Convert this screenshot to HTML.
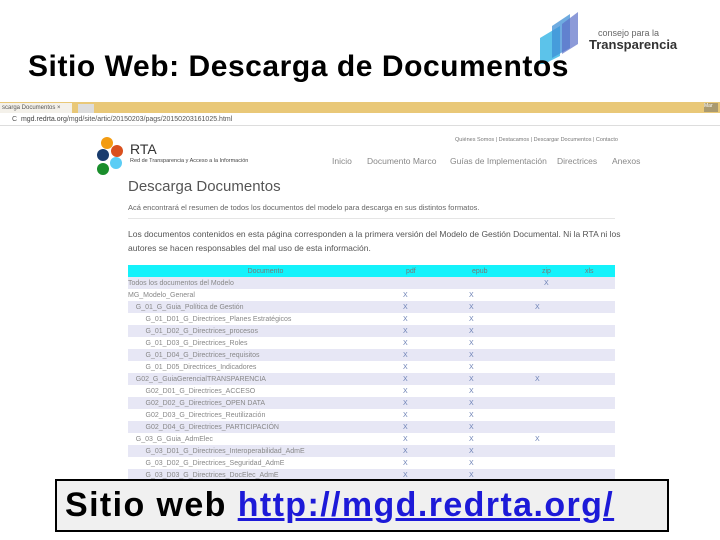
<!DOCTYPE html>
<html><head><meta charset="utf-8"><style>
*{margin:0;padding:0;box-sizing:border-box}
body{width:720px;height:540px;background:#fff;position:relative;overflow:hidden;font-family:"Liberation Sans",sans-serif}
.title{position:absolute;left:28px;top:50px;font-size:30px;font-weight:bold;color:#000;white-space:nowrap;letter-spacing:0.55px}
.tabs{position:absolute;left:0;top:102px;width:720px;height:11px;background:#e9c878}
.tab{position:absolute;left:0;top:1px;width:72px;height:10px;background:#f4f1ea;font-size:6px;color:#555;padding-left:2px;line-height:10px}
.addr{position:absolute;left:0;top:113px;width:720px;height:13px;background:#fff;border-bottom:1px solid #ddd;font-size:7px;color:#555;line-height:13px;padding-left:12px}
.addr span{color:#444}
.page{position:absolute;left:0;top:126px;width:720px;height:354px;background:#fff}
.c{position:absolute;border-radius:50%;width:12px;height:12px}
.rta{position:absolute;left:130px;top:141px;font-size:14px;color:#333}
.rtasub{position:absolute;left:130px;top:158px;font-size:5.5px;color:#444}
.toplinks{position:absolute;left:455px;top:137px;font-size:5.5px;color:#777}
.nav{position:absolute;top:156px;font-size:8.5px;color:#888}
h2{position:absolute;left:128px;top:178px;font-size:15px;font-weight:normal;color:#555}
.p1{position:absolute;left:128px;top:203px;font-size:7.5px;color:#666}
.hr{position:absolute;left:128px;top:218px;width:487px;height:1px;background:#e5e5e5}
.p2{position:absolute;left:128px;top:227px;font-size:8.5px;color:#555;line-height:14px;width:500px}
table{position:absolute;left:128px;top:265px;width:487px;border-collapse:collapse;font-size:7px;color:#888}
td{height:12px;padding:0;white-space:nowrap}
tr.h td{background:#14f2fb;color:#777;height:12px}
tr:nth-child(even) td{background:#e7e7f5}
td.x{color:#6a7fb4;padding-left:0}
.box{position:absolute;left:55px;top:479px;width:614px;height:53px;background:#f0f0f0;border:2px solid #000;font-size:34px;font-weight:bold;line-height:49px;padding-left:8px;color:#000;white-space:nowrap;letter-spacing:1.4px}
.box a{color:#1d1ad8;text-decoration:underline}
</style></head><body>
<svg style="position:absolute;left:538px;top:8px" width="50" height="56" viewBox="0 0 50 56">
<polygon points="2,30 22,18 22,48 2,58" fill="#3fb9e6" opacity="0.85"/>
<polygon points="14,18 32,6 32,40 14,50" fill="#3f8fd6" opacity="0.75"/>
<polygon points="24,16 40,4 40,36 24,46" fill="#5b6fc8" opacity="0.7"/>
</svg>
<div style="position:absolute;left:598px;top:28px;font-size:9px;color:#666">consejo para la</div>
<div style="position:absolute;left:589px;top:37px;font-size:13px;font-weight:bold;color:#333">Transparencia</div>
<div class="title">Sitio Web: Descarga de Documentos</div>
<div class="tabs"><div class="tab">scarga Documentos × </div><div style="position:absolute;left:78px;top:2px;width:16px;height:9px;background:#ddd"></div><div style="position:absolute;right:2px;top:1px;width:14px;height:9px;background:#aa9a70;font-size:5px;color:#fff">Mar</div></div>
<div class="addr">C &nbsp;<span>mgd.redrta.org</span>/mgd/site/artic/20150203/pags/20150203161025.html</div>
<div class="page">
<div class="c" style="left:101px;top:11px;background:#f39c12"></div>
<div class="c" style="left:111px;top:19px;background:#d9501e"></div>
<div class="c" style="left:97px;top:23px;background:#183b6d"></div>
<div class="c" style="left:110px;top:31px;background:#5bcdf5"></div>
<div class="c" style="left:97px;top:37px;background:#1a8e2c"></div>
</div>
<div class="rta">RTA</div>
<div class="rtasub">Red de Transparencia y Acceso a la Información</div>
<div class="toplinks">Quiénes Somos | Destacamos | Descargar Documentos | Contacto</div>
<div class="nav" style="left:332px">Inicio</div>
<div class="nav" style="left:367px">Documento Marco</div>
<div class="nav" style="left:450px">Guías de Implementación</div>
<div class="nav" style="left:557px">Directrices</div>
<div class="nav" style="left:612px">Anexos</div>
<h2>Descarga Documentos</h2>
<div class="p1">Acá encontrará el resumen de todos los documentos del modelo para descarga en sus distintos formatos.</div>
<div class="hr"></div>
<div class="p2">Los documentos contenidos en esta página corresponden a la primera versión del Modelo de Gestión Documental. Ni la RTA ni los autores se hacen responsables del mal uso de esta información.</div>
<table>
<colgroup><col style="width:275px"><col style="width:66px"><col style="width:66px"><col style="width:50px"><col></colgroup>
<tr class="h"><td style="text-align:center">Documento</td><td style="padding-left:3px">pdf</td><td style="padding-left:3px">epub</td><td style="padding-left:7px">zip</td><td>xls</td></tr>
<tr><td>Todos los documentos del Modelo</td><td></td><td></td><td class="x" style="padding-left:9px">X</td><td></td></tr>
<tr><td>MG_Modelo_General</td><td class="x">X</td><td class="x">X</td><td></td><td></td></tr>
<tr><td>&nbsp;&nbsp;&nbsp;&nbsp;G_01_G_Guia_Política de Gestión</td><td class="x">X</td><td class="x">X</td><td class="x">X</td><td></td></tr>
<tr><td>&nbsp;&nbsp;&nbsp;&nbsp;&nbsp;&nbsp;&nbsp;&nbsp;&nbsp;G_01_D01_G_Directrices_Planes Estratégicos</td><td class="x">X</td><td class="x">X</td><td></td><td></td></tr>
<tr><td>&nbsp;&nbsp;&nbsp;&nbsp;&nbsp;&nbsp;&nbsp;&nbsp;&nbsp;G_01_D02_G_Directrices_procesos</td><td class="x">X</td><td class="x">X</td><td></td><td></td></tr>
<tr><td>&nbsp;&nbsp;&nbsp;&nbsp;&nbsp;&nbsp;&nbsp;&nbsp;&nbsp;G_01_D03_G_Directrices_Roles</td><td class="x">X</td><td class="x">X</td><td></td><td></td></tr>
<tr><td>&nbsp;&nbsp;&nbsp;&nbsp;&nbsp;&nbsp;&nbsp;&nbsp;&nbsp;G_01_D04_G_Directrices_requisitos</td><td class="x">X</td><td class="x">X</td><td></td><td></td></tr>
<tr><td>&nbsp;&nbsp;&nbsp;&nbsp;&nbsp;&nbsp;&nbsp;&nbsp;&nbsp;G_01_D05_Directrices_Indicadores</td><td class="x">X</td><td class="x">X</td><td></td><td></td></tr>
<tr><td>&nbsp;&nbsp;&nbsp;&nbsp;G02_G_GuiaGerencialTRANSPARENCIA</td><td class="x">X</td><td class="x">X</td><td class="x">X</td><td></td></tr>
<tr><td>&nbsp;&nbsp;&nbsp;&nbsp;&nbsp;&nbsp;&nbsp;&nbsp;&nbsp;G02_D01_G_Directrices_ACCESO</td><td class="x">X</td><td class="x">X</td><td></td><td></td></tr>
<tr><td>&nbsp;&nbsp;&nbsp;&nbsp;&nbsp;&nbsp;&nbsp;&nbsp;&nbsp;G02_D02_G_Directrices_OPEN DATA</td><td class="x">X</td><td class="x">X</td><td></td><td></td></tr>
<tr><td>&nbsp;&nbsp;&nbsp;&nbsp;&nbsp;&nbsp;&nbsp;&nbsp;&nbsp;G02_D03_G_Directrices_Reutilización</td><td class="x">X</td><td class="x">X</td><td></td><td></td></tr>
<tr><td>&nbsp;&nbsp;&nbsp;&nbsp;&nbsp;&nbsp;&nbsp;&nbsp;&nbsp;G02_D04_G_Directrices_PARTICIPACIÓN</td><td class="x">X</td><td class="x">X</td><td></td><td></td></tr>
<tr><td>&nbsp;&nbsp;&nbsp;&nbsp;G_03_G_Guia_AdmElec</td><td class="x">X</td><td class="x">X</td><td class="x">X</td><td></td></tr>
<tr><td>&nbsp;&nbsp;&nbsp;&nbsp;&nbsp;&nbsp;&nbsp;&nbsp;&nbsp;G_03_D01_G_Directrices_Interoperabilidad_AdmE</td><td class="x">X</td><td class="x">X</td><td></td><td></td></tr>
<tr><td>&nbsp;&nbsp;&nbsp;&nbsp;&nbsp;&nbsp;&nbsp;&nbsp;&nbsp;G_03_D02_G_Directrices_Seguridad_AdmE</td><td class="x">X</td><td class="x">X</td><td></td><td></td></tr>
<tr><td>&nbsp;&nbsp;&nbsp;&nbsp;&nbsp;&nbsp;&nbsp;&nbsp;&nbsp;G_03_D03_G_Directrices_DocElec_AdmE</td><td class="x">X</td><td class="x">X</td><td></td><td></td></tr>
</table>
<div class="box">Sitio web <a>http://mgd.redrta.org/</a></div>
</body></html>
